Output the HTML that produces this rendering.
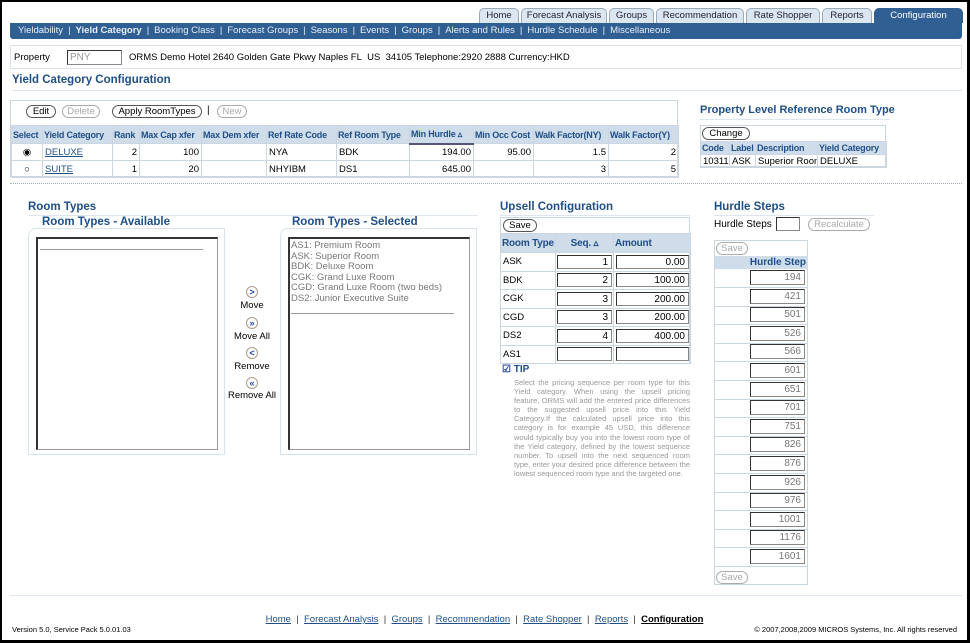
<!DOCTYPE html><html><head><style>
*{box-sizing:border-box;margin:0;padding:0}
body{width:970px;height:643px;background:#000;font-family:"Liberation Sans",sans-serif;font-size:10px;color:#000;overflow:hidden;position:relative}
#pg{position:absolute;left:2px;top:2px;width:965px;height:638px;background:#fff;overflow:hidden}
.a{position:absolute}
.tab{position:absolute;top:6px;height:15px;background:#dce6f0;border:1px solid #9ab;border-bottom:none;border-radius:5px 5px 0 0;font-size:9.5px;line-height:14px;text-align:center;color:#223}
.nav{position:absolute;left:8px;top:21px;width:952px;height:16px;background:#2f5f93;color:#e8eef6;font-size:9.5px;line-height:16px;padding-left:8px;white-space:nowrap;border-radius:0 0 3px 3px}
.nav span{margin:0 5px}
.h{color:#1f4f86;font-weight:bold;font-size:11.5px;white-space:nowrap}
.hl{border-bottom:1px solid #dde5ee}
.btn{position:absolute;height:13px;border:1px solid #555;border-radius:7px;font-size:9.5px;line-height:11px;text-align:center;background:#fff}
.btn.d{border-color:#aaa;color:#aaa}
table{border-collapse:collapse;table-layout:fixed}
.t td,.t th{border:1px solid #ccd6e0;font-size:9.5px;padding:0 2px;white-space:nowrap;overflow:hidden}
.t th{background:#cfdcea;color:#1f4f86;font-weight:bold;text-align:left;font-size:9px;padding:0 1px;letter-spacing:-0.2px}
.r{text-align:right}
a{color:#1f4f86}
.inp{position:absolute;border:1px solid #888;border-top-color:#333;border-left-color:#333;background:#fff;font-size:10px;text-align:right;padding-right:3px;line-height:13px}
.circ{position:absolute;width:12px;height:12px;border:1px solid #a98;border-radius:50%;font-size:9px;line-height:10px;text-align:center;color:#24a;font-weight:bold}
.lbl{position:absolute;width:60px;text-align:center;font-size:9.5px}
.hr{position:absolute;left:713px;width:93px;border-top:1px solid #ccd6e0}
</style></head><body><div id="pg">
<div class="tab" style="left:477px;width:40px">Home</div>
<div class="tab" style="left:519px;width:86px">Forecast Analysis</div>
<div class="tab" style="left:607px;width:45px">Groups</div>
<div class="tab" style="left:654px;width:88px">Recommendation</div>
<div class="tab" style="left:744px;width:74px">Rate Shopper</div>
<div class="tab" style="left:820px;width:50px">Reports</div>
<div class="tab" style="left:872px;width:89px;background:#2f5f93;color:#fff;border-color:#2f5f93">Configuration</div>
<div class="nav">Yieldability<span>|</span><b>Yield Category</b><span>|</span>Booking Class<span>|</span>Forecast Groups<span>|</span>Seasons<span>|</span>Events<span>|</span>Groups<span>|</span>Alerts and Rules<span>|</span>Hurdle Schedule<span>|</span>Miscellaneous</div>
<div class="a" style="left:8px;top:43px;width:952px;height:24px;border:1px solid #dde3ea"></div>
<div class="a" style="left:12px;top:50px;font-size:9.5px">Property</div>
<div class="inp" style="left:65px;top:48px;width:55px;height:15px;text-align:left;color:#999;padding-left:2px">PNY</div>
<div class="a" style="left:127px;top:50px;font-size:9.5px">ORMS Demo Hotel 2640 Golden Gate Pkwy Naples FL&nbsp; US&nbsp; 34105 Telephone:2920 2888 Currency:HKD</div>
<div class="a h hl" style="left:10px;top:72px;width:950px;height:17px">Yield Category Configuration</div>

<div class="a" style="left:8px;top:98px;width:668px;height:77px;border:1px solid #ccd6e0"></div>
<div class="btn" style="left:24px;top:103px;width:30px">Edit</div>
<div class="btn d" style="left:60px;top:103px;width:38px">Delete</div>
<div class="btn" style="left:110px;top:103px;width:90px">Apply RoomTypes</div>
<div class="a" style="left:205px;top:103px">|</div>
<div class="btn d" style="left:215px;top:103px;width:30px">New</div>
<table class="t a" style="left:9px;top:123px;width:667px">
<colgroup><col style="width:31px"><col style="width:70px"><col style="width:27px"><col style="width:62px"><col style="width:65px"><col style="width:70px"><col style="width:73px"><col style="width:64px"><col style="width:60px"><col style="width:75px"><col style="width:70px"></colgroup>
<tr style="height:18px"><th>Select</th><th>Yield Category</th><th>Rank</th><th>Max Cap xfer</th><th>Max Dem xfer</th><th>Ref Rate Code</th><th>Ref Room Type</th><th style="border-bottom:2px solid #557">Min Hurdle ▵</th><th>Min Occ Cost</th><th>Walk Factor(NY)</th><th>Walk Factor(Y)</th></tr>
<tr style="height:17px"><td style="text-align:center">◉</td><td><a href="#">DELUXE</a></td><td class="r">2</td><td class="r">100</td><td></td><td>NYA</td><td>BDK</td><td class="r">194.00</td><td class="r">95.00</td><td class="r">1.5</td><td class="r">2</td></tr>
<tr style="height:17px"><td style="text-align:center">○</td><td><a href="#">SUITE</a></td><td class="r">1</td><td class="r">20</td><td></td><td>NHYIBM</td><td>DS1</td><td class="r">645.00</td><td></td><td class="r">3</td><td class="r">5</td></tr>
</table>
<div class="a h hl" style="left:698px;top:102px;width:190px;height:16px;font-size:11px">Property Level Reference Room Type</div>
<div class="a" style="left:698px;top:123px;width:186px;height:42px;border:1px solid #ccd6e0"></div>
<div class="btn" style="left:700px;top:125px;width:48px">Change</div>
<table class="t a" style="left:698px;top:139px;width:186px"><colgroup><col style="width:29px"><col style="width:26px"><col style="width:62px"><col style="width:69px"></colgroup><tr style="height:13px"><th>Code</th><th>Label</th><th>Description</th><th>Yield Category</th></tr><tr style="height:13px"><td>10311</td><td>ASK</td><td>Superior Room</td><td>DELUXE</td></tr></table>
<div class="a" style="left:8px;top:181px;width:952px;border-top:1px dotted #aab"></div>

<div class="a h hl" style="left:26px;top:199px;width:450px;height:15px">Room Types</div>
<div class="a h" style="left:40px;top:214px">Room Types - Available</div>
<div class="a h" style="left:290px;top:214px">Room Types - Selected</div>
<div class="a" style="left:26px;top:226px;width:197px;height:227px;border:1px solid #d8e2ec;border-radius:8px 0 0 0"></div>
<div class="a" style="left:34px;top:235px;width:182px;height:213px;border:1px solid #999;border-top:2px solid #333;border-left:2px solid #333"></div>
<div class="a" style="left:38px;top:247px;width:163px;border-top:1px solid #999"></div>
<div class="a" style="left:278px;top:226px;width:197px;height:227px;border:1px solid #d8e2ec;border-radius:8px 0 0 0"></div>
<div class="a" style="left:286px;top:235px;width:182px;height:213px;border:1px solid #999;border-top:2px solid #333;border-left:2px solid #333"></div>
<div class="a" style="left:289px;top:239px;color:#777;font-size:9.5px;line-height:10.5px">AS1: Premium Room<br>ASK: Superior Room<br>BDK: Deluxe Room<br>CGK: Grand Luxe Room<br>CGD: Grand Luxe Room (two beds)<br>DS2: Junior Executive Suite</div>
<div class="a" style="left:289px;top:311px;width:163px;border-top:1px solid #999"></div>
<div class="circ" style="left:244px;top:284px">&gt;</div><div class="lbl" style="left:220px;top:298px">Move</div>
<div class="circ" style="left:244px;top:315px">»</div><div class="lbl" style="left:220px;top:329px">Move All</div>
<div class="circ" style="left:244px;top:345px">&lt;</div><div class="lbl" style="left:220px;top:359px">Remove</div>
<div class="circ" style="left:244px;top:375px">«</div><div class="lbl" style="left:220px;top:388px">Remove All</div>

<div class="a h hl" style="left:498px;top:199px;width:190px;height:15px">Upsell Configuration</div>
<div class="a" style="left:498px;top:215px;width:190px;height:147px;border:1px solid #ccd6e0"></div>
<div class="btn" style="left:501px;top:217px;width:34px">Save</div>
<table class="t a" style="left:498px;top:231px;width:190px">
<colgroup><col style="width:55px"><col style="width:58px"><col style="width:77px"></colgroup>
<tr style="height:19px"><th style="font-size:10px">Room Type</th><th style="text-align:center;font-size:10px">Seq. ▵</th><th class="r" style="font-size:10px">Amount</th></tr>
<tr style="height:18.5px"><td>ASK</td><td></td><td></td></tr>
<tr style="height:18.5px"><td>BDK</td><td></td><td></td></tr>
<tr style="height:18.5px"><td>CGK</td><td></td><td></td></tr>
<tr style="height:18.5px"><td>CGD</td><td></td><td></td></tr>
<tr style="height:18.5px"><td>DS2</td><td></td><td></td></tr>
<tr style="height:18.5px"><td>AS1</td><td></td><td></td></tr>
</table>
<div class="inp" style="left:555px;top:253px;width:55px;height:14px">1</div><div class="inp" style="left:614px;top:253px;width:73px;height:14px">0.00</div>
<div class="inp" style="left:555px;top:271px;width:55px;height:14px">2</div><div class="inp" style="left:614px;top:271px;width:73px;height:14px">100.00</div>
<div class="inp" style="left:555px;top:290px;width:55px;height:14px">3</div><div class="inp" style="left:614px;top:290px;width:73px;height:14px">200.00</div>
<div class="inp" style="left:555px;top:308px;width:55px;height:14px">3</div><div class="inp" style="left:614px;top:308px;width:73px;height:14px">200.00</div>
<div class="inp" style="left:555px;top:327px;width:55px;height:14px">4</div><div class="inp" style="left:614px;top:327px;width:73px;height:14px">400.00</div>
<div class="inp" style="left:555px;top:345px;width:55px;height:14px"></div><div class="inp" style="left:614px;top:345px;width:73px;height:14px"></div>
<div class="a h" style="left:500px;top:362px;font-size:10px"><span style="color:#24a">☑</span> TIP</div>
<div class="a" style="left:512px;top:376px;width:176px;font-size:7.5px;line-height:9.1px;color:#999;text-align:justify">Select the pricing sequence per room type for this Yield category. When using the upsell pricing feature, ORMS will add the entered price differences to the suggested upsell price into this Yield Category.If the calculated upsell price into this category is for example 45 USD, this difference would typically buy you into the lowest room type of the Yield category, defined by the lowest sequence number. To upsell into the next sequenced room type, enter your desired price difference between the lowest sequenced room type and the targeted one.</div>

<div class="a h hl" style="left:712px;top:199px;width:160px;height:15px">Hurdle Steps</div>
<div class="a" style="left:712px;top:217px">Hurdle Steps</div>
<div class="inp" style="left:774px;top:215px;width:24px;height:14px"></div>
<div class="btn d" style="left:806px;top:216px;width:62px">Recalculate</div>
<div class="a" style="left:712px;top:238px;width:94px;height:345px;border:1px solid #ccd6e0"></div>
<div class="btn d" style="left:714px;top:240px;width:32px">Save</div>
<div class="a" style="left:713px;top:254px;width:93px;height:13px;background:#cfdcea;color:#1f4f86;font-weight:bold;text-align:right;padding-right:2px;line-height:13px">Hurdle Step</div>
<div class="hr" style="top:285px"></div><div class="hr" style="top:304px"></div><div class="hr" style="top:322px"></div><div class="hr" style="top:341px"></div><div class="hr" style="top:359px"></div><div class="hr" style="top:378px"></div><div class="hr" style="top:397px"></div><div class="hr" style="top:415px"></div><div class="hr" style="top:434px"></div><div class="hr" style="top:452px"></div><div class="hr" style="top:471px"></div><div class="hr" style="top:490px"></div><div class="hr" style="top:508px"></div><div class="hr" style="top:527px"></div><div class="hr" style="top:545px"></div><div class="hr" style="top:564px"></div>
<div class="btn d" style="left:714px;top:569px;width:32px">Save</div>

<div class="inp" style="left:748px;top:268px;width:55px;height:15px;color:#777">194</div>
<div class="inp" style="left:748px;top:287px;width:55px;height:15px;color:#777">421</div>
<div class="inp" style="left:748px;top:305px;width:55px;height:15px;color:#777">501</div>
<div class="inp" style="left:748px;top:324px;width:55px;height:15px;color:#777">526</div>
<div class="inp" style="left:748px;top:342px;width:55px;height:15px;color:#777">566</div>
<div class="inp" style="left:748px;top:361px;width:55px;height:15px;color:#777">601</div>
<div class="inp" style="left:748px;top:380px;width:55px;height:15px;color:#777">651</div>
<div class="inp" style="left:748px;top:398px;width:55px;height:15px;color:#777">701</div>
<div class="inp" style="left:748px;top:417px;width:55px;height:15px;color:#777">751</div>
<div class="inp" style="left:748px;top:435px;width:55px;height:15px;color:#777">826</div>
<div class="inp" style="left:748px;top:454px;width:55px;height:15px;color:#777">876</div>
<div class="inp" style="left:748px;top:473px;width:55px;height:15px;color:#777">926</div>
<div class="inp" style="left:748px;top:491px;width:55px;height:15px;color:#777">976</div>
<div class="inp" style="left:748px;top:510px;width:55px;height:15px;color:#777">1001</div>
<div class="inp" style="left:748px;top:528px;width:55px;height:15px;color:#777">1176</div>
<div class="inp" style="left:748px;top:547px;width:55px;height:15px;color:#777">1601</div>

<div class="a" style="left:8px;top:593px;width:952px;border-top:1px solid #dde5ee"></div>
<div class="a" style="left:0;top:612px;width:965px;text-align:center;font-size:9.5px;color:#333"><a href="#">Home</a> &nbsp;|&nbsp; <a href="#">Forecast Analysis</a> &nbsp;|&nbsp; <a href="#">Groups</a> &nbsp;|&nbsp; <a href="#">Recommendation</a> &nbsp;|&nbsp; <a href="#">Rate Shopper</a> &nbsp;|&nbsp; <a href="#">Reports</a> &nbsp;|&nbsp; <b style="color:#000;text-decoration:underline">Configuration</b></div>
<div class="a" style="left:10px;top:623px;font-size:7.5px">Version 5.0, Service Pack 5.0.01.03</div>
<div class="a" style="right:10px;top:623px;font-size:7.5px">© 2007,2008,2009 MICROS Systems, Inc. All rights reserved</div>
</div>
</body></html>
